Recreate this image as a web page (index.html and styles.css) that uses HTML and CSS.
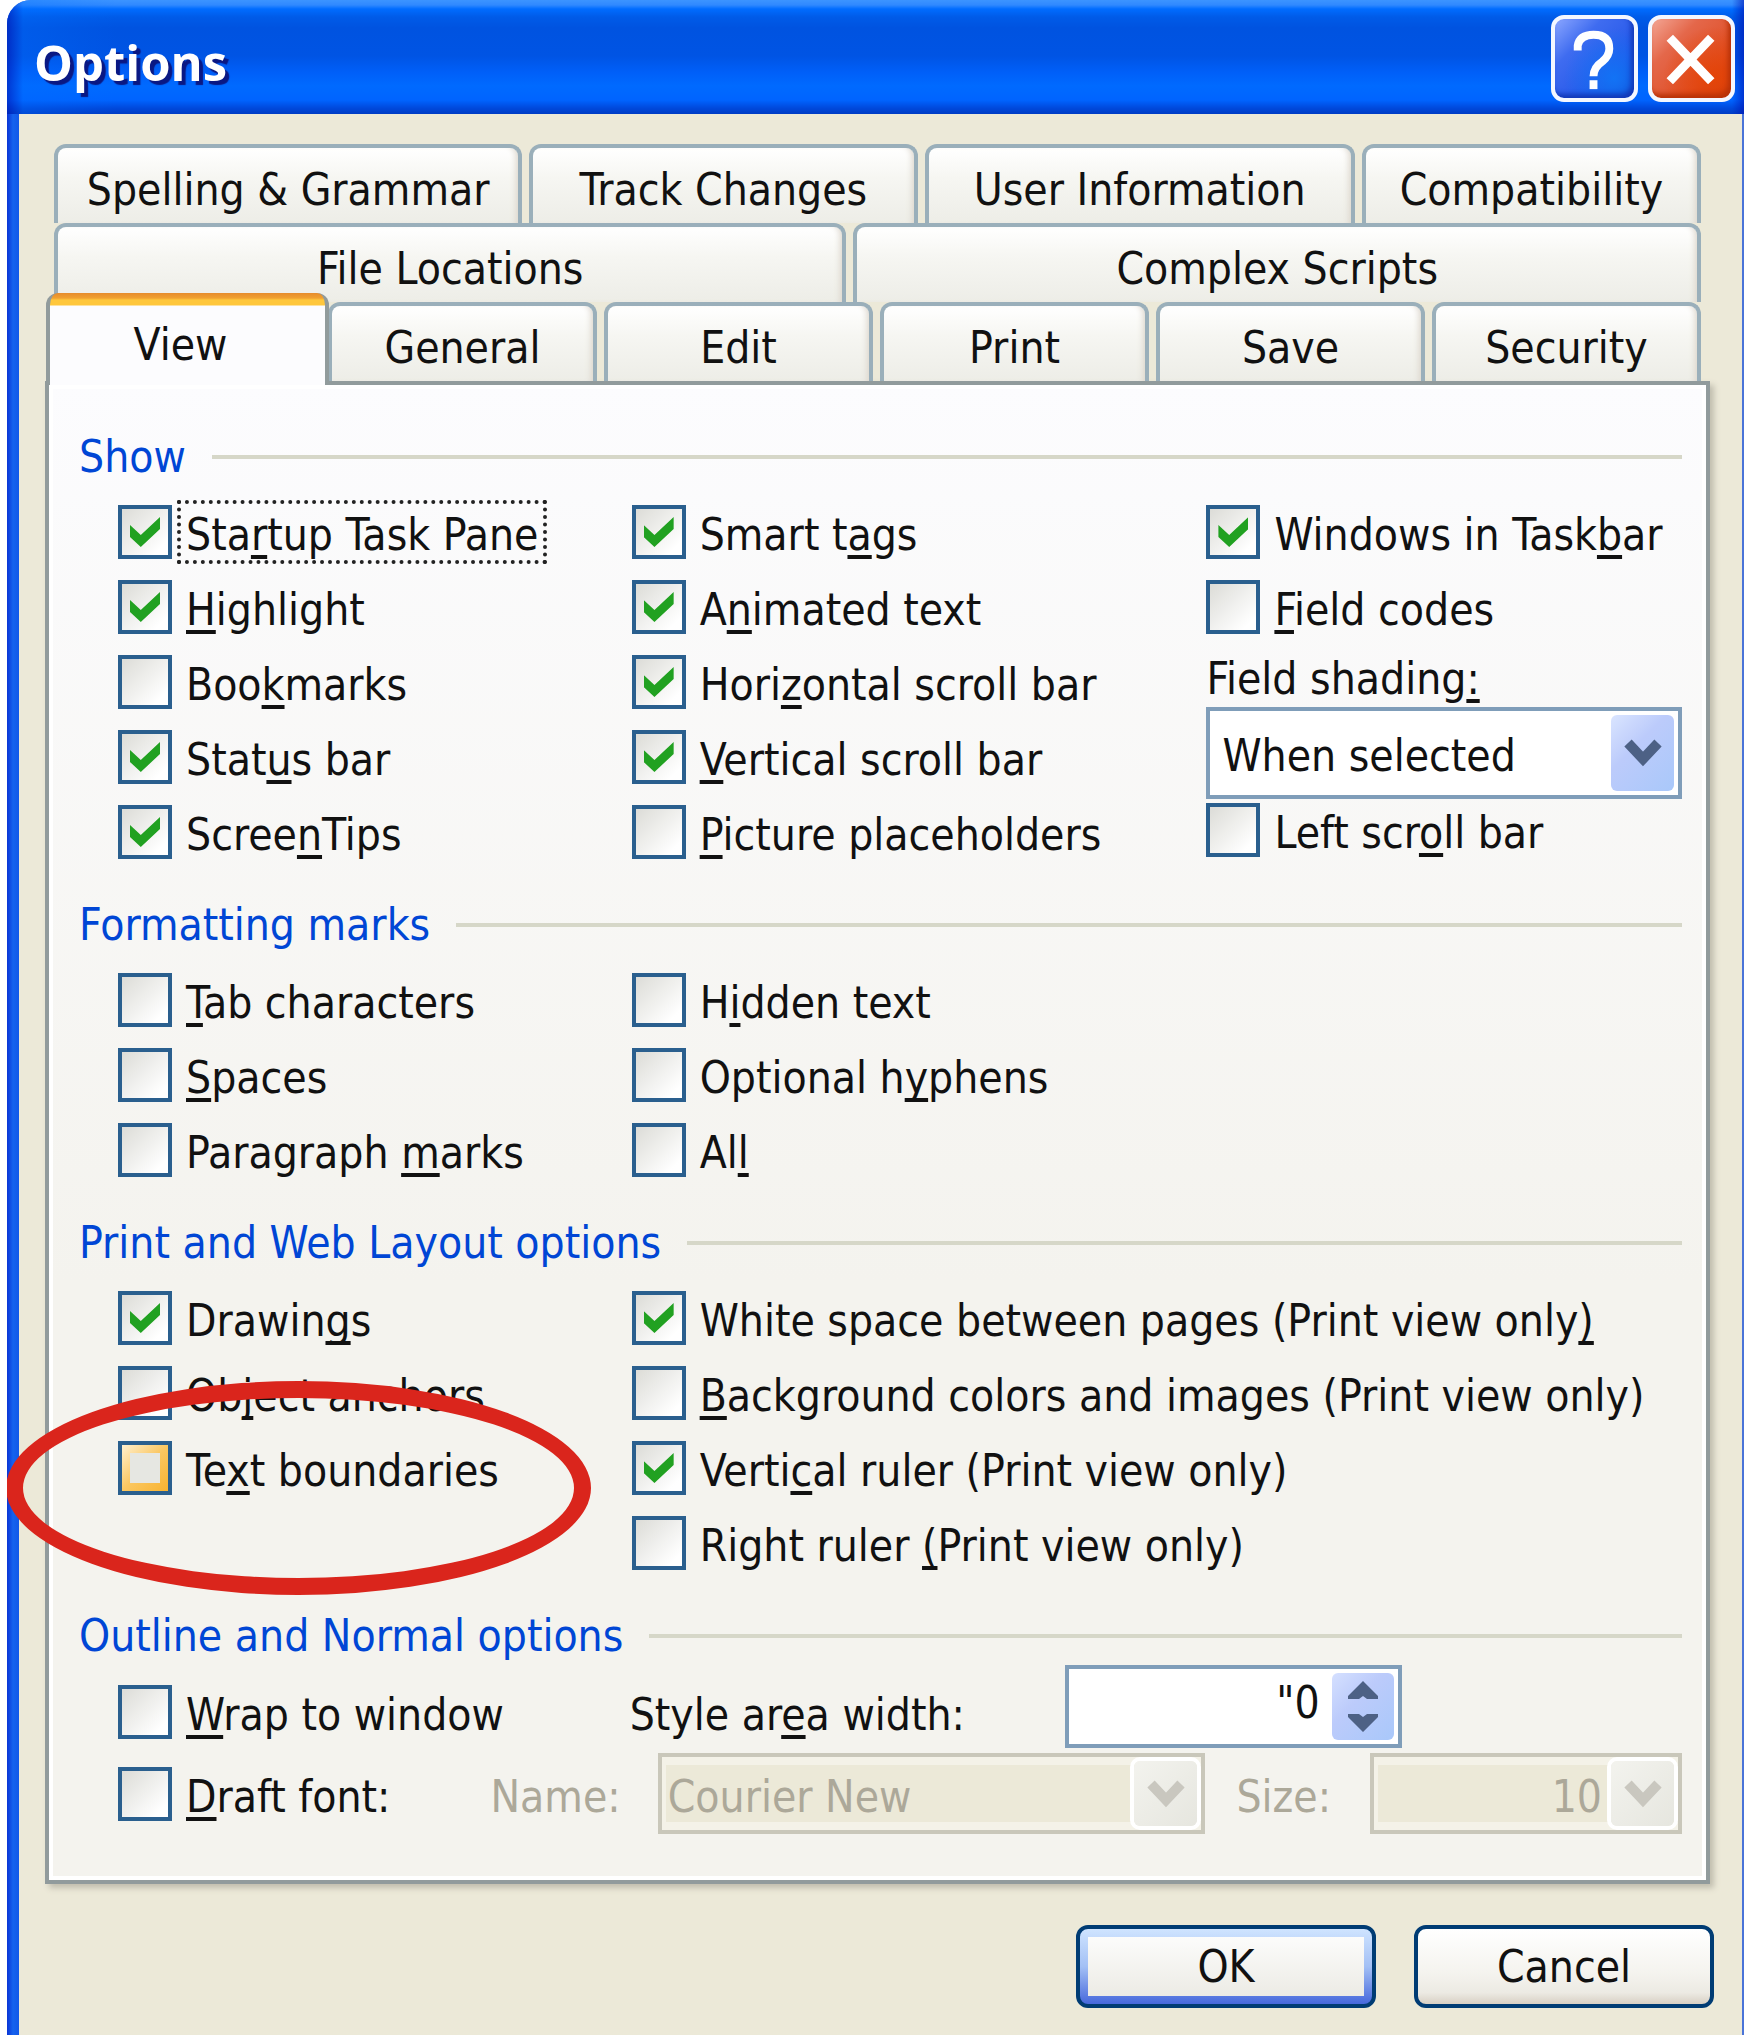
FILE: index.html
```html
<!DOCTYPE html>
<html lang="en">
<head>
    <meta charset="UTF-8">
    <meta name="viewport" content="width=device-width, initial-scale=1.0">
    <title>Options</title>
    <link rel="stylesheet" href="styles.css">
</head>
<body>
    <div class="window">
        <header class="titlebar">
            <h1>Options</h1>
            <button type="button" class="caption-btn help" aria-label="Help">
                <svg viewBox="0 0 80 80" fill="none" stroke="#fff" stroke-width="8">
                    <path d="M23 32V27Q25 16 39 16Q55 16 55 30Q55 37 48 43Q39 49 39 58"/>
                    <path d="M39 62V71"/>
                </svg>
            </button>
            <button type="button" class="caption-btn close" aria-label="Close">
                <svg viewBox="0 0 80 80" fill="none" stroke="#fff" stroke-width="9">
                    <path d="M18 19L60 63M60 19L18 63"/>
                </svg>
            </button>
        </header>

        <main class="content">
            <nav class="tabs" role="tablist">
                <div class="tab-row top">
                    <button type="button" role="tab" class="tab">Spelling &amp; Grammar</button>
                    <button type="button" role="tab" class="tab">Track Changes</button>
                    <button type="button" role="tab" class="tab">User Information</button>
                    <button type="button" role="tab" class="tab">Compatibility</button>
                </div>
                <div class="tab-row">
                    <button type="button" role="tab" class="tab">File Locations</button>
                    <button type="button" role="tab" class="tab">Complex Scripts</button>
                </div>
                <div class="tab-row even">
                    <button type="button" role="tab" class="tab active" aria-selected="true">View</button>
                    <button type="button" role="tab" class="tab">General</button>
                    <button type="button" role="tab" class="tab">Edit</button>
                    <button type="button" role="tab" class="tab">Print</button>
                    <button type="button" role="tab" class="tab">Save</button>
                    <button type="button" role="tab" class="tab">Security</button>
                </div>
            </nav>

            <form class="panel">
                <section>
                    <h2>Show</h2>
                    <div class="columns">
                        <div class="col">
                            <label class="check"><input type="checkbox" checked><span class="focused">Sta<u>r</u>tup Task Pane</span></label>
                            <label class="check"><input type="checkbox" checked><span><u>H</u>ighlight</span></label>
                            <label class="check"><input type="checkbox"><span>Boo<u>k</u>marks</span></label>
                            <label class="check"><input type="checkbox" checked><span>Stat<u>u</u>s bar</span></label>
                            <label class="check"><input type="checkbox" checked><span>Scree<u>n</u>Tips</span></label>
                        </div>
                        <div class="col">
                            <label class="check"><input type="checkbox" checked><span>Smart t<u>a</u>gs</span></label>
                            <label class="check"><input type="checkbox" checked><span>A<u>n</u>imated text</span></label>
                            <label class="check"><input type="checkbox" checked><span>Hori<u>z</u>ontal scroll bar</span></label>
                            <label class="check"><input type="checkbox" checked><span><u>V</u>ertical scroll bar</span></label>
                            <label class="check"><input type="checkbox"><span><u>P</u>icture placeholders</span></label>
                        </div>
                        <div class="col">
                            <label class="check"><input type="checkbox" checked><span>Windows in Task<u>b</u>ar</span></label>
                            <label class="check"><input type="checkbox"><span><u>F</u>ield codes</span></label>
                            <div class="field">
                                <label for="shading">Field shading<u>:</u></label>
                                <div class="combo">
                                    <select id="shading">
                                        <option>When selected</option>
                                    </select>
                                    <span class="arrow"><svg viewBox="0 0 40 28"><path d="M5 4L20 20L35 4"/></svg></span>
                                </div>
                                <label class="check"><input type="checkbox"><span>Left scr<u>o</u>ll bar</span></label>
                            </div>
                        </div>
                    </div>
                </section>

                <section>
                    <h2>Formatting marks</h2>
                    <div class="columns">
                        <div class="col">
                            <label class="check"><input type="checkbox"><span><u>T</u>ab characters</span></label>
                            <label class="check"><input type="checkbox"><span><u>S</u>paces</span></label>
                            <label class="check"><input type="checkbox"><span>Paragraph <u>m</u>arks</span></label>
                        </div>
                        <div class="col">
                            <label class="check"><input type="checkbox"><span>H<u>i</u>dden text</span></label>
                            <label class="check"><input type="checkbox"><span>Optional h<u>y</u>phens</span></label>
                            <label class="check"><input type="checkbox"><span>Al<u>l</u></span></label>
                        </div>
                    </div>
                </section>

                <section>
                    <h2>Print and Web Layout options</h2>
                    <div class="columns">
                        <div class="col">
                            <label class="check"><input type="checkbox" checked><span>Drawin<u>g</u>s</span></label>
                            <label class="check"><input type="checkbox"><span>Ob<u>j</u>ect anchors</span></label>
                            <div class="marked">
                                <label class="check hot"><input type="checkbox"><span>Te<u>x</u>t boundaries</span></label>
                                <div class="ring"></div>
                            </div>
                        </div>
                        <div class="col wide">
                            <label class="check"><input type="checkbox" checked><span>White space between pages (Print view only<u>)</u></span></label>
                            <label class="check"><input type="checkbox"><span><u>B</u>ackground colors and images (Print view only)</span></label>
                            <label class="check"><input type="checkbox" checked><span>Verti<u>c</u>al ruler (Print view only)</span></label>
                            <label class="check"><input type="checkbox"><span>Right ruler <u>(</u>Print view only)</span></label>
                        </div>
                    </div>
                </section>

                <section class="outline">
                    <h2>Outline and Normal options</h2>
                    <div class="line width-line">
                        <label class="check"><input type="checkbox"><span><u>W</u>rap to window</span></label>
                        <label class="text-label" for="area">Style ar<u>e</u>a width:</label>
                        <div class="spin">
                            <input type="text" id="area" value="&quot;0">
                            <div class="spin-buttons">
                                <button type="button" aria-label="Increase"><svg viewBox="0 0 30 18"><path d="M15 0L30 15V18H19L15 15L11 18H0V15Z"/></svg></button>
                                <button type="button" aria-label="Decrease"><svg viewBox="0 0 30 18"><path d="M15 18L30 3V0H19L15 3L11 0H0V3Z"/></svg></button>
                            </div>
                        </div>
                    </div>
                    <div class="line font-line">
                        <label class="check"><input type="checkbox"><span><u>D</u>raft font:</span></label>
                        <label class="text-label off" for="fontName">Name:</label>
                        <div class="combo off">
                            <select id="fontName" disabled>
                                <option>Courier New</option>
                            </select>
                            <span class="arrow"><svg viewBox="0 0 40 28"><path d="M5 4L20 20L35 4"/></svg></span>
                        </div>
                        <label class="text-label off size-label" for="fontSize">Size:</label>
                        <div class="combo off number">
                            <select id="fontSize" disabled>
                                <option>10</option>
                            </select>
                            <span class="arrow"><svg viewBox="0 0 40 28"><path d="M5 4L20 20L35 4"/></svg></span>
                        </div>
                    </div>
                </section>
            </form>

            <footer class="actions">
                <button type="submit" class="btn default">OK</button>
                <button type="button" class="btn">Cancel</button>
            </footer>
        </main>
    </div>
</body>
</html>
```
FILE: styles.css
```css
* {
    box-sizing: border-box;
}

body {
    margin: 0;
    background: #fff;
    color: #111;
    font-family: "DejaVu Sans Condensed", "DejaVu Sans", sans-serif;
    font-size: 44px;
    line-height: 48px;
}

button, input, select {
    font: inherit;
    color: inherit;
    margin: 0;
}

u {
    text-decoration-thickness: 4px;
    text-underline-offset: 5px;
    text-decoration-skip-ink: none;
}

.window {
    min-height: 100vh;
    margin-left: 7px;
    padding: 0 2px 0 12px;
    border-radius: 24px 0 0 0;
    overflow: hidden;
    background: linear-gradient(to right, #0a34d6 0, #1563ee 6px, #1258e8 12px, #4a74d8 13px);
    display: flex;
    flex-direction: column;
}

/* title bar */

.titlebar {
    height: 114px;
    margin: 0 -2px 0 -12px;
    padding: 2px 9px 0 27px;
    display: flex;
    align-items: center;
    gap: 10px;
    background:
        linear-gradient(to right, rgba(0, 20, 180, 0.6), rgba(0, 110, 255, 0.3) 16px, transparent 110px),
        linear-gradient(to left, rgba(0, 20, 180, 0.6), transparent 12px),
        linear-gradient(to bottom, #3c94ff 0, #3089ff 5px, #006cff 9px, #005be8 17px, #0053e0 28px, #0054e4 56px, #005ff8 72px, #006aff 86px, #0064ff 100px, #0049dc 108px, #003cc4 114px);
}

.titlebar h1 {
    flex: 1;
    margin: 0;
    padding-top: 8px;
    color: #fff;
    font-family: "Open Sans", sans-serif;
    font-size: 49px;
    font-weight: bold;
    text-shadow: 4px 4px 1px #0a1883;
}

.caption-btn {
    width: 87px;
    height: 87px;
    padding: 0;
    border: 4px solid #f4f7ff;
    border-radius: 13px;
}

.caption-btn svg {
    display: block;
    width: 100%;
}

.help {
    background: radial-gradient(circle at 75% 75%, #1273f5, transparent 60%), linear-gradient(135deg, #8ba6ff, #3f6cf0 30%, #2456e8 70%, #0a35b8);
    box-shadow: inset -3px -4px 5px #1238b8;
}

.close {
    background: radial-gradient(circle at 80% 75%, #e44408, transparent 60%), linear-gradient(135deg, #f3a695, #e4674a 30%, #df4f26 70%, #b52c05);
    box-shadow: inset -3px -4px 5px #b83208;
}

.content {
    flex: 1;
    padding: 30px 28px 26px 26px;
    background: #ece9d8;
}

/* tabs */

.tabs {
    margin: 0 13px 0 9px;
}

.tab-row {
    display: flex;
    gap: 7px;
    height: 79px;
}

.tab-row.top {
    display: grid;
    grid-template-columns: 468fr 388fr 430fr 339fr;
}

.tab {
    flex: 1 1 auto;
    padding: 8px 0 0;
    border: 4px solid #9aafba;
    border-bottom: 0;
    border-radius: 12px 12px 0 0;
    background: linear-gradient(to bottom, #fff, #f6f6f2 40%, #edede7);
    box-shadow: inset -6px 0 6px -4px #dcd6cc;
}

.even .tab {
    flex: 1 1 0;
}

.even .active {
    position: relative;
    flex: 1 1 16px;
    margin: -9px -8px -4px;
    padding: 12px 14px 0 0;
    border-color: #919b9c;
    border-top: 0;
    background: linear-gradient(to bottom, #e68b2c 0, #f0a030 5px, #ffc73c 7px, #ffc73c 12px, #fcfcfe 13px);
    box-shadow: none;
}

/* page */

.panel {
    margin-right: 4px;
    padding: 45px 24px 41px 25px;
    border: 4px solid #919b9c;
    outline: 4px solid #fff;
    outline-offset: -8px;
    background: linear-gradient(to bottom, #fcfcfe, #f4f3ee 60%);
    box-shadow: 4px 4px 6px #c0bdae;
}

section {
    padding: 0 0 39px 5px;
}

section.outline {
    padding-bottom: 5px;
}

h2 {
    display: flex;
    align-items: center;
    gap: 26px;
    height: 54px;
    margin: 0 0 21px;
    color: #0046d5;
    font-size: 44px;
    font-weight: normal;
    line-height: 54px;
}

h2::after {
    content: "";
    flex: 1;
    height: 4px;
    background: #d6d7c8;
}

.columns {
    display: grid;
    grid-template-columns: 513fr 574fr 475fr;
    margin-left: 39px;
}

.col {
    display: flex;
    flex-direction: column;
    gap: 21px;
}

.wide {
    grid-column: span 2;
}

.check {
    display: flex;
    align-items: center;
    height: 54px;
    gap: 10px;
    white-space: nowrap;
}

.check span {
    padding: 6px 4px 0;
}

.check .focused {
    outline: 4px dotted #222;
    outline-offset: 1px;
}

.check input {
    appearance: none;
    flex: none;
    display: grid;
    place-items: center;
    width: 54px;
    height: 54px;
    border: 4px solid #2a5f8e;
    background: linear-gradient(135deg, #dcdcd7, #fff 85%);
}

.check input:checked::before {
    content: "";
    width: 30px;
    height: 30px;
    background: #21a121;
    clip-path: polygon(0 27%, 36% 60%, 100% 0, 100% 40%, 36% 100%, 0 67%);
}

.check.hot input {
    background: linear-gradient(135deg, #fff0cf, #fbc761 50%, #f8b330);
}

.check.hot input::before {
    content: "";
    width: 30px;
    height: 30px;
    background: #e6e7e2;
}

.marked {
    position: relative;
}

.ring {
    position: absolute;
    left: -112px;
    top: -60px;
    width: 585px;
    height: 214px;
    border: 17px solid #da251c;
    border-radius: 50%;
    pointer-events: none;
}

.field {
    display: flex;
    flex-direction: column;
    gap: 4px;
}

/* drop-downs and spinner */

.combo {
    position: relative;
    height: 92px;
}

.combo select {
    appearance: none;
    width: 100%;
    height: 100%;
    padding: 6px 76px 0 12px;
    border: 4px solid #7f9db9;
    border-radius: 0;
    background: #fff;
}

.arrow {
    position: absolute;
    top: 8px;
    right: 8px;
    bottom: 8px;
    width: 63px;
    display: grid;
    place-items: center;
    border-radius: 6px;
    background: linear-gradient(135deg, #dae5ff, #bccbfb 40%, #a9c8fa);
    pointer-events: none;
}

.arrow svg {
    width: 40px;
    fill: none;
    stroke: #4d6185;
    stroke-width: 10;
}

.combo.off {
    height: 81px;
}

.combo.off select {
    opacity: 1;
    padding-left: 6px;
    color: #aca899;
    border-color: #c9c7ba;
    background: #ece9d8;
    box-shadow: inset 0 8px #f4f2e8, inset 0 -8px #f4f2e8, inset 4px 0 #f4f2e8;
}

.combo.off .arrow {
    background: linear-gradient(135deg, #f3f3ee, #e6e6df);
    box-shadow: 0 0 0 4px #fff;
}

.combo.off .arrow svg {
    stroke: #c9c7bf;
}

.combo.number select {
    text-align: right;
    text-align-last: right;
}

.spin {
    display: flex;
    height: 83px;
    padding: 4px;
    border: 4px solid #7f9db9;
    background: #fff;
}

.spin input {
    flex: 1;
    width: 0;
    min-width: 0;
    padding: 0 12px 8px 0;
    border: 0;
    background: none;
    text-align: right;
}

.spin-buttons {
    display: flex;
    flex-direction: column;
    width: 62px;
    border-radius: 6px;
    background: linear-gradient(135deg, #d5e0ff, #bccbfb 40%, #a9c8fa);
}

.spin-buttons button {
    flex: 1;
    display: grid;
    place-items: center;
    padding: 0;
    border: 0;
    background: none;
}

.spin-buttons svg {
    width: 30px;
    fill: #4d6185;
}

.line {
    display: grid;
    margin-left: 39px;
    white-space: nowrap;
}

.outline h2 {
    margin-bottom: 2px;
}

.width-line {
    grid-template-columns: 511fr 435fr 336fr 280fr;
    align-items: end;
    margin-bottom: 5px;
}

.width-line > label {
    margin-bottom: 9px;
}

.font-line {
    grid-template-columns: 372fr 167fr 547fr 164fr 312fr;
    align-items: center;
}

.text-label {
    height: 54px;
    padding-top: 6px;
}

.text-label.off {
    color: #aca899;
}

.size-label {
    padding-left: 31px;
}

/* bottom buttons */

.actions {
    display: flex;
    justify-content: flex-end;
    gap: 38px;
    margin-top: 41px;
}

.btn {
    width: 300px;
    height: 83px;
    padding: 0;
    border: 4px solid #003c74;
    border-radius: 12px;
    background: linear-gradient(to bottom, #fff, #f4f3ee 60%, #eceae3 85%, #d8d0c4);
}

.btn.default {
    background:
        linear-gradient(to bottom, #fcfcfb, #ecebe5) content-box,
        linear-gradient(to bottom, #cfe4ff, #a3c0f5 50%, #4668dc);
    padding: 8px;
    line-height: 59px;
}
```
